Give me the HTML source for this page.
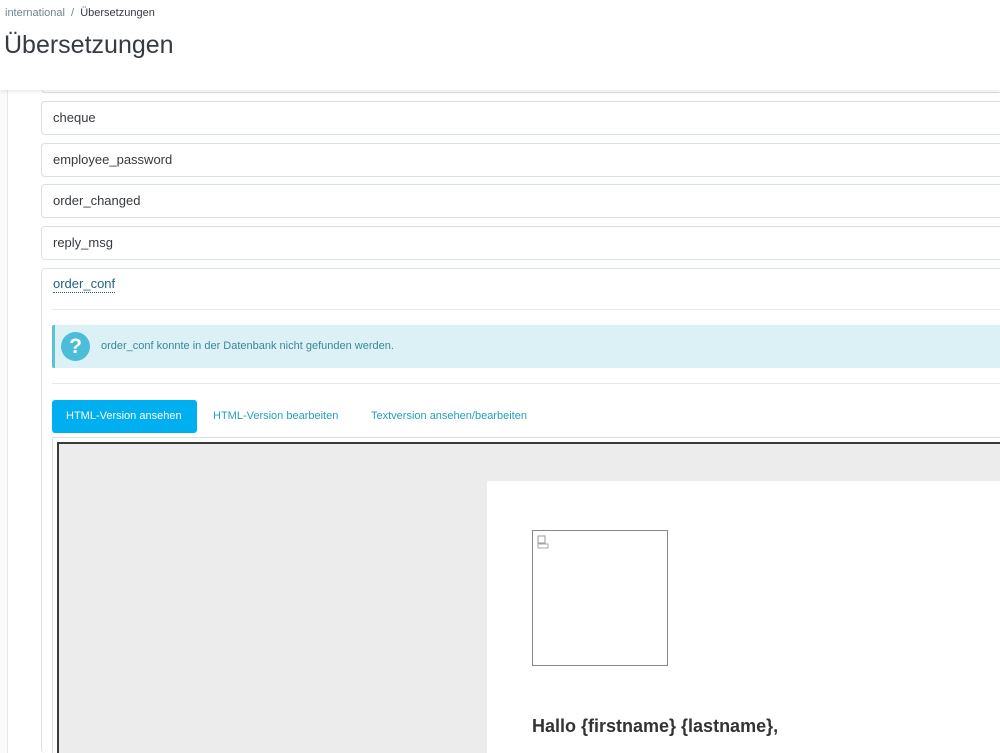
<!DOCTYPE html>
<html style="overflow:hidden;width:1000px;height:753px"><head><meta charset="utf-8"><style>
*{box-sizing:border-box;margin:0;padding:0}
body{width:1000px;height:753px;overflow:hidden;background:#fff;font-family:"Liberation Sans",sans-serif;color:#363a41;position:relative}
.abs{position:absolute}
.hdr{left:0;top:0;width:1000px;height:90px;background:#fff;box-shadow:0 2px 3px rgba(0,0,0,.08);z-index:2}
.bc{left:5px;top:7px;font-size:11px;color:#6c868e}
.bc b{font-weight:normal;color:#363a41}
h1{position:absolute;left:4px;top:31px;font-size:25px;font-weight:normal;color:#363a41}
.strip{left:0;top:90px;width:8px;height:663px;background:#fafafa;border-right:1px solid #e8e8e8}
.item{left:41px;width:970px;height:34px;border:1px solid #dbe0e3;border-radius:4px;font-size:13px;padding:8px 11px;color:#363a41;background:#fff}
.big{left:41px;top:268px;width:970px;height:500px;border:1px solid #dbe0e3;border-radius:4px;background:#fff}
.sep{left:52px;width:960px;height:1px;background:#e6e9eb}
.alert{left:52px;top:325px;width:960px;height:43px;background:#dcf1f6;border-left:3px solid #5fbfd3;border-radius:2px}
.q{left:61px;top:332px;width:29px;height:29px;border-radius:50%;background:#4cbcd9;color:#fff;font-weight:bold;font-size:21px;text-align:center;line-height:29px}
.atext{left:101px;top:340px;font-size:11px;color:#3c8796}
.tab{top:400px;height:33px;font-size:11px;line-height:33px;padding:0 14px;color:#25a0bd;white-space:nowrap}
.tab.on{background:#00aff0;color:#fff;border-radius:3px;left:52px;width:145px}
.frame{left:52px;top:437px;width:960px;height:330px;border:1px solid #dbe0e3}
.ifr{left:57px;top:442px;width:960px;height:320px;border:2px solid #3a3a3a;border-bottom:0;background:#ececec}
.card{left:487px;top:481px;width:520px;height:272px;background:#fff}
.img{left:532px;top:530px;width:136px;height:136px;border:1px solid #888;background:#fff}
.hallo{left:532px;top:716px;font-size:18px;font-weight:bold;color:#333;white-space:nowrap}
</style></head><body>
<div class="abs hdr"><div class="abs bc">international &nbsp;/ &nbsp;<b>Übersetzungen</b></div><h1>Übersetzungen</h1></div>
<div class="abs strip"></div>
<div class="abs item" style="top:58px;height:35px"></div>
<div class="abs item" style="top:101px">cheque</div>
<div class="abs item" style="top:143px">employee_password</div>
<div class="abs item" style="top:184px">order_changed</div>
<div class="abs item" style="top:226px">reply_msg</div>
<div class="abs big" style="height:485px;border-bottom:0"></div>
<div class="abs" style="left:53px;top:276px;font-size:13px;color:#25627a;border-bottom:1px dotted #25627a;line-height:16px">order_conf</div>
<div class="abs sep" style="top:309px"></div>
<div class="abs alert"></div>
<div class="abs q">?</div>
<div class="abs atext">order_conf konnte in der Datenbank nicht gefunden werden.</div>
<div class="abs sep" style="top:383px"></div>
<div class="abs tab on">HTML-Version ansehen</div>
<div class="abs tab" style="left:199px">HTML-Version bearbeiten</div>
<div class="abs tab" style="left:357px">Textversion ansehen/bearbeiten</div>
<div class="abs frame" style="height:316px;border-bottom:0"></div>
<div class="abs ifr" style="height:311px"></div>
<div class="abs card"></div>
<div class="abs img"><svg width="12" height="14" style="position:absolute;left:4px;top:4px"><rect x="1" y="1" width="7" height="7" fill="none" stroke="#999"/><rect x="1" y="9" width="10" height="4" fill="none" stroke="#aaa"/></svg></div>
<div class="abs hallo">Hallo {firstname} {lastname},</div>
</body></html>
